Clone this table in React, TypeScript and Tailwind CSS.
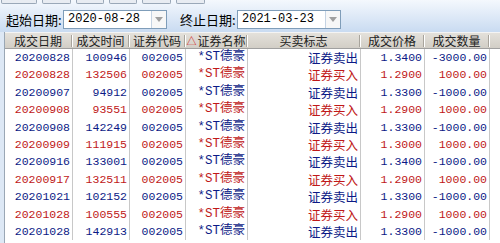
const rows = [
  ['20200828', '100946', '002005', '证券卖出', '1.3400', '-3000.00'],
  ['20200828', '132506', '002005', '证券买入', '1.2900', '1000.00'],
  ['20200907', '94912', '002005', '证券卖出', '1.3300', '-1000.00'],
  ['20200908', '93551', '002005', '证券买入', '1.2900', '1000.00'],
  ['20200908', '142249', '002005', '证券卖出', '1.3300', '-1000.00'],
  ['20200909', '111915', '002005', '证券买入', '1.3000', '1000.00'],
  ['20200916', '133001', '002005', '证券卖出', '1.3400', '-1000.00'],
  ['20200917', '132511', '002005', '证券买入', '1.2900', '1000.00'],
  ['20201021', '102152', '002005', '证券卖出', '1.3300', '-1000.00'],
  ['20201028', '100555', '002005', '证券买入', '1.2900', '1000.00'],
  ['20201028', '142913', '002005', '证券卖出', '1.3300', '-1000.00'],
];

const mono = "font-['Liberation_Mono','Noto_Sans_CJK_SC',monospace]";
const cjk = "font-['Noto_Sans_CJK_SC',sans-serif]";

const DateBox = ({ value }: { value: string }) => (
  <div className="flex h-[19px] w-[104px] border border-[#7f9db9] bg-white">
    <div className={`flex-1 pl-[4px] text-[12px] leading-[17px] text-black ${mono}`}>{value}</div>
    <div className="flex w-[15px] items-center justify-center border-l border-[#c5d3e3] bg-[#f7f7f7]">
      <svg width="8" height="5" viewBox="0 0 8 5">
        <path d="M0 0h8L4 5z" fill="#a0a0a0" />
      </svg>
    </div>
  </div>
);

const HeadCell = ({ w, label, sort }: { w: string; label: string; sort?: boolean }) => (
  <div className={`flex h-full items-center ${w}`}>
    <div className="flex flex-1 items-center justify-center whitespace-nowrap text-[12px] text-[#222]">
      {sort && <span className="mr-[1px] text-[10px] leading-[10px] text-[#d02020]">△</span>}
      {label}
    </div>
    <span className="h-[12px] w-[2px] border-l border-[#a8a49c] border-r border-r-white" />
  </div>
);

export default function App() {
  return (
    <div className={`h-[243px] w-[500px] overflow-hidden bg-white ${cjk}`}>
      {/* 工具栏 */}
      <div className="h-[32px] bg-gradient-to-b from-[#f4f8fd] to-[#c9dbf1]">
        <div className="flex h-[4px] gap-[5px] pl-[1px]">
          {[36, 29, 28, 28, 29, 29].map((w, i) => (
            <div key={i} style={{ width: w }} className="h-[4px] rounded-b-[2px] border border-t-0 border-[#9aa8b8] bg-[#e8ecf2]" />
          ))}
        </div>
        <div className="flex items-center pt-[6px] text-[13px] text-black">
          <span className="ml-[6px] w-[57px]">起始日期:</span>
          <DateBox value="2020-08-28" />
          <span className="ml-[13px] w-[57px]">终止日期:</span>
          <DateBox value="2021-03-23" />
        </div>
      </div>

      {/* 表格 */}
      <div className="flex h-[211px]">
        <div className="w-[5px] border-r border-[#9aa7b5] bg-[#dde8f5]" />
        <div className="flex flex-1 flex-col">
          <div className="flex h-[17px] border-y border-t-[#f4f4f4] border-b-[#a0a0a0] bg-gradient-to-b from-[#e4e1db] to-[#d2cec6]">
            <HeadCell w="w-[68px]" label="成交日期" />
            <HeadCell w="w-[57px]" label="成交时间" />
            <HeadCell w="w-[56px]" label="证券代码" />
            <HeadCell w="w-[62px]" label="证券名称" sort />
            <HeadCell w="w-[113px]" label="买卖标志" />
            <HeadCell w="w-[64px]" label="成交价格" />
            <HeadCell w="w-[65px]" label="成交数量" />
          </div>
          {rows.map((r, i) => {
            const color = r[3] === '证券买入' ? 'text-[#c01818]' : 'text-[#0c1a86]';
            const cell = 'h-full border-r border-[#c8c8c8] pr-[2px] text-right whitespace-nowrap';
            return (
              <div key={i} className={`flex h-[17.4px] items-center leading-[17px] ${color}`}>
                <div className={`${cell} w-[68px] text-[11.5px] ${mono}`}>{r[0]}</div>
                <div className={`${cell} w-[57px] text-[11.5px] ${mono}`}>{r[1]}</div>
                <div className={`${cell} w-[56px] text-[11.5px] ${mono}`}>{r[2]}</div>
                <div className={`${cell} w-[62px] text-[12.5px] ${mono}`}>*ST德豪</div>
                <div className={`${cell} w-[113px] text-[12.5px] ${cjk}`}>{r[3]}</div>
                <div className={`${cell} w-[64px] text-[11.5px] ${mono}`}>{r[4]}</div>
                <div className={`${cell} w-[65px] text-[11.5px] ${mono}`}>{r[5]}</div>
              </div>
            );
          })}
        </div>
      </div>
    </div>
  );
}
